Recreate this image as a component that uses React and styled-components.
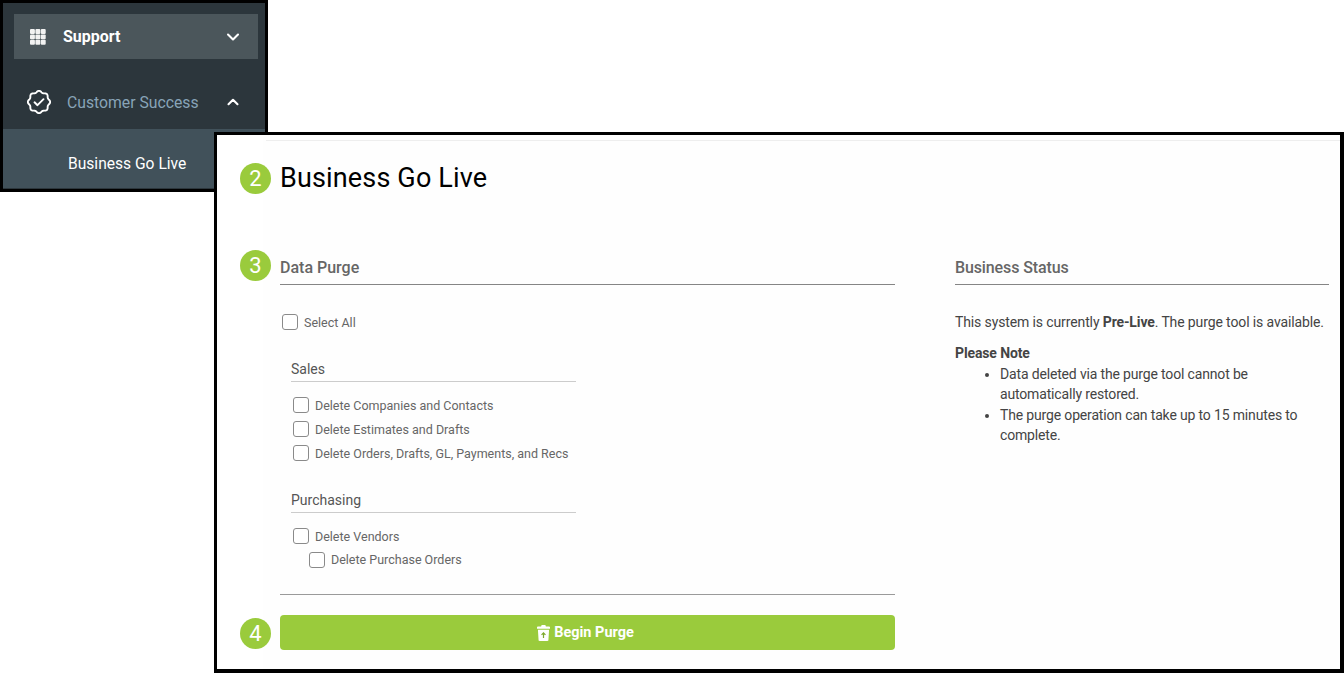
import React from "react";
import styled, { createGlobalStyle } from "styled-components";
import { ChevronDown, ChevronUp } from "lucide-react";

const Global = createGlobalStyle`
  html, body { margin: 0; padding: 0; background: #fff; }
  body { font-family: Roboto, "Liberation Sans", sans-serif; overflow: hidden; }
  * { box-sizing: border-box; }
`;

const Page = styled.div`
  width: 1344px;
  height: 673px;
  overflow: hidden;
`;

const Sidebar = styled.nav`
  width: 268px;
  height: 192px;
  border: 3px solid #000;
  background: #2c363c;
  padding-top: 11px;
`;

const SupportRow = styled.div`
  display: flex;
  align-items: center;
  height: 45px;
  margin: 0 7px 0 11px;
  padding: 0 15px 0 16px;
  background: #4b565b;
`;

const SupportLabel = styled.span`
  flex: 1;
  margin-left: 17px;
  font-size: 16px;
  font-weight: 700;
  color: #fff;
`;

const GroupRow = styled.div`
  display: flex;
  align-items: center;
  height: 70px;
  padding: 16px 23px 0 24px;
`;

const GroupLabel = styled.span`
  flex: 1;
  margin-left: 16px;
  font-size: 15.75px;
  color: #88a4b8;
`;

const SubItem = styled.div`
  display: flex;
  align-items: center;
  height: 59px;
  padding: 11px 0 0 65px;
  background: #41515a;
  font-size: 15.6px;
  color: #fff;
`;

const Panel = styled.main`
  width: 1130px;
  height: 541px;
  margin: -60px 0 0 214px;
  position: relative;
  border: solid #000;
  border-width: 3px 4px 4px 3px;
  background: linear-gradient(to right, #fff 46px, #fefefe 46px);
  padding: 5px 0 0 23px;
`;

const TopRule = styled.div`
  height: 1px;
  margin-left: 26px;
  background: #eeeeee;
`;

const TitleRow = styled.div`
  display: flex;
  align-items: center;
  gap: 9px;
  height: 30px;
  margin-top: 22px;
`;

const Step = styled.span`
  flex: none;
  width: 31px;
  height: 31px;
  border-radius: 50%;
  background: #9acb3c;
  color: #fff;
  font-size: 22px;
  display: flex;
  align-items: center;
  justify-content: center;
`;

const Title = styled.h1`
  margin: 0;
  font-size: 27px;
  font-weight: 400;
  letter-spacing: 0.15px;
  color: #000;
`;

const Columns = styled.div`
  display: grid;
  grid-template-columns: 655px 374px;
  column-gap: 60px;
  margin-top: 65px;
`;

const PurgeColumn = styled.section`
  display: grid;
  grid-template-columns: 31px 615px;
  column-gap: 9px;
  align-content: start;
`;

const StepTop = styled.div`
  margin-top: -8px;
`;

const Heading = styled.h2`
  margin: 0;
  height: 27px;
  border-bottom: 1px solid #858585;
  font-size: 16px;
  line-height: 19px;
  font-weight: 500;
  color: #666666;
`;

const Options = styled.div`
  height: 310px;
  border-bottom: 1px solid #9a9a9a;
  padding-top: 25px;
`;

const CheckRow = styled.label`
  display: flex;
  align-items: center;
  gap: 6px;
  height: ${(props) => props.$h || 24}px;
  margin-left: ${(props) => props.$indent || 0}px;
  font-size: 12.5px;
  white-space: nowrap;
  color: #666666;
`;

const Box = styled.span`
  flex: none;
  width: 16px;
  height: 16px;
  border: 1px solid #8a8a8a;
  border-radius: 3px;
  background: #fff;
`;

const Group = styled.div`
  margin: ${(props) => props.$top}px 0 0 11px;
  width: 285px;
`;

const GroupTitle = styled.div`
  height: 23px;
  border-bottom: 1px solid #cccccc;
  font-size: 14px;
  line-height: 20px;
  color: #555555;
  margin-bottom: 11px;
`;

const PurgeButton = styled.button`
  display: flex;
  align-items: center;
  justify-content: center;
  gap: 4px;
  width: 615px;
  height: 35px;
  margin-top: 20px;
  padding: 0 4px 0 0;
  border: 0;
  border-radius: 4px;
  background: #9acb3c;
  color: #fff;
  font-family: inherit;
  font-size: 14.5px;
  font-weight: 700;
`;

const StepBottom = styled.div`
  margin-top: 23px;
`;

const StatusColumn = styled.aside`
  color: #444444;
  font-size: 14px;
  line-height: 20px;
  letter-spacing: -0.12px;
`;

const StatusText = styled.p`
  margin: 27px 0 0;
  white-space: nowrap;
`;

const NoteTitle = styled.div`
  margin: 11px 0 1px;
  font-weight: 700;
`;

const NoteList = styled.ul`
  margin: 0;
  padding-left: 45px;
  letter-spacing: -0.16px;

  li + li {
    margin-top: 1px;
  }
`;

const GridIcon = () => (
  <svg width="16" height="16" viewBox="0 0 16 16" fill="#f2f2f2">
    {[0, 5.4, 10.8].flatMap((y) =>
      [0, 5.4, 10.8].map((x) => <rect key={`${x}-${y}`} x={x} y={y} width="4.9" height="4.9" rx="1" />)
    )}
  </svg>
);

// scalloped circle, same outline as the badge in the sidebar
const badgeOutline = () => {
  const pts = [];
  for (let i = 0; i < 96; i++) {
    const a = (i / 96) * Math.PI * 2;
    const r = 10.4 + 0.8 * Math.cos(8 * a);
    pts.push(`${(12 + r * Math.cos(a)).toFixed(2)} ${(12 + r * Math.sin(a)).toFixed(2)}`);
  }
  return `M${pts.join("L")}Z`;
};

const BadgeIcon = () => (
  <svg width="24" height="24" viewBox="0 0 24 24" fill="none" stroke="#fff" strokeWidth="1.9" strokeLinecap="round" strokeLinejoin="round">
    <path d={badgeOutline()} />
    <path d="M7.5 12.3l3 2.900 6-6" />
  </svg>
);

const TrashUpIcon = () => (
  <svg width="13" height="16" viewBox="0 0 14 17">
    <path fill="#fff" d="M5 0h4l.6 1.400H13c.6 0 1 .4 1 1V4H0V2.400c0-.6.4-1 1-1h3.400zM1 5h12l-.7 11c0 .6-.5 1-1 1H2.700c-.5 0-1-.4-1-1z" />
    <path fill="none" stroke="#7da82c" strokeWidth="1.300" d="M7 14V8.500M4.900 10.500L7 8.300l2.100 2.200" />
  </svg>
);

const Check = ({ children, indent, h }) => (
  <CheckRow $indent={indent} $h={h}>
    <Box />
    {children}
  </CheckRow>
);

export default function App() {
  return (
    <Page>
      <Global />
      <Sidebar>
        <SupportRow>
          <GridIcon />
          <SupportLabel>Support</SupportLabel>
          <ChevronDown size={20} color="#fff" strokeWidth={2.5} />
        </SupportRow>
        <GroupRow>
          <BadgeIcon />
          <GroupLabel>Customer Success</GroupLabel>
          <ChevronUp size={18} color="#fff" strokeWidth={2.8} />
        </GroupRow>
        <SubItem>Business Go Live</SubItem>
      </Sidebar>
      <Panel>
        <TopRule />
        <TitleRow>
          <Step>2</Step>
          <Title>Business Go Live</Title>
        </TitleRow>
        <Columns>
          <PurgeColumn>
            <StepTop>
              <Step>3</Step>
            </StepTop>
            <div>
              <Heading>Data Purge</Heading>
              <Options>
                <Check indent={2}>Select All</Check>
                <Group $top={25}>
                  <GroupTitle>Sales</GroupTitle>
                  <Check indent={2}>Delete Companies and Contacts</Check>
                  <Check indent={2}>Delete Estimates and Drafts</Check>
                  <Check indent={2}>Delete Orders, Drafts, GL, Payments, and Recs</Check>
                </Group>
                <Group $top={25}>
                  <GroupTitle>Purchasing</GroupTitle>
                  <Check indent={2}>Delete Vendors</Check>
                  <Check indent={18} h={23}>Delete Purchase Orders</Check>
                </Group>
              </Options>
            </div>
            <StepBottom>
              <Step>4</Step>
            </StepBottom>
            <PurgeButton>
              <TrashUpIcon />
              Begin Purge
            </PurgeButton>
          </PurgeColumn>
          <StatusColumn>
            <Heading>Business Status</Heading>
            <StatusText>
              This system is currently <strong>Pre-Live</strong>. The purge tool is available.
            </StatusText>
            <NoteTitle>Please Note</NoteTitle>
            <NoteList>
              <li>Data deleted via the purge tool cannot be automatically restored.</li>
              <li>The purge operation can take up to 15 minutes to complete.</li>
            </NoteList>
          </StatusColumn>
        </Columns>
      </Panel>
    </Page>
  );
}
